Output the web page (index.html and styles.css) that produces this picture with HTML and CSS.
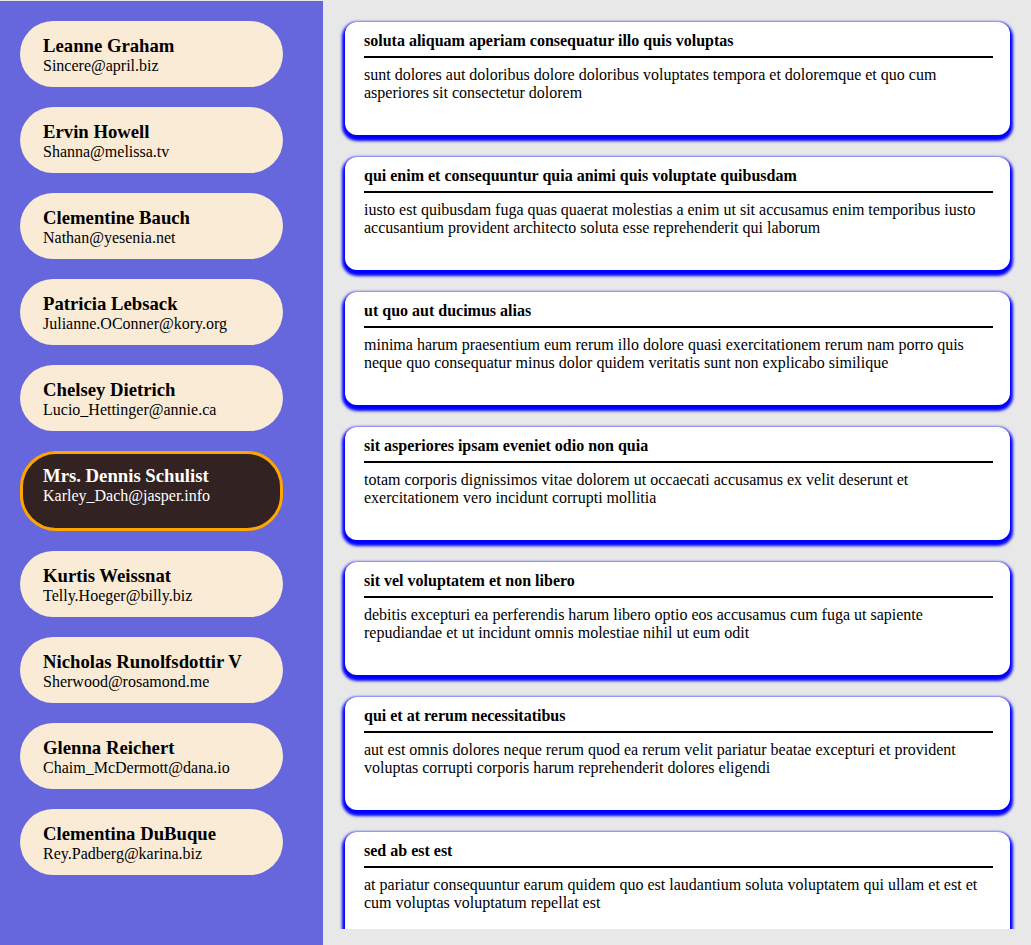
FILE: index.html
```html
<!DOCTYPE html>
<html>
<head>
<meta charset="utf-8">
<link rel="stylesheet" href="styles.css">
</head>
<body>
<div class="app">
  <aside class="sidebar">
    <div class="user"><div class="name">Leanne Graham</div><div class="email">Sincere@april.biz</div></div>
    <div class="user"><div class="name">Ervin Howell</div><div class="email">Shanna@melissa.tv</div></div>
    <div class="user"><div class="name">Clementine Bauch</div><div class="email">Nathan@yesenia.net</div></div>
    <div class="user"><div class="name">Patricia Lebsack</div><div class="email">Julianne.OConner@kory.org</div></div>
    <div class="user"><div class="name">Chelsey Dietrich</div><div class="email">Lucio_Hettinger@annie.ca</div></div>
    <div class="user selected"><div class="name">Mrs. Dennis Schulist</div><div class="email">Karley_Dach@jasper.info</div></div>
    <div class="user"><div class="name">Kurtis Weissnat</div><div class="email">Telly.Hoeger@billy.biz</div></div>
    <div class="user"><div class="name">Nicholas Runolfsdottir V</div><div class="email">Sherwood@rosamond.me</div></div>
    <div class="user"><div class="name">Glenna Reichert</div><div class="email">Chaim_McDermott@dana.io</div></div>
    <div class="user"><div class="name">Clementina DuBuque</div><div class="email">Rey.Padberg@karina.biz</div></div>
  </aside>
  <main class="main">
    <div class="posts">
      <article class="post"><h3 class="title">soluta aliquam aperiam consequatur illo quis voluptas</h3><p class="body">sunt dolores aut doloribus dolore doloribus voluptates tempora et doloremque et quo cum asperiores sit consectetur dolorem</p></article>
      <article class="post"><h3 class="title">qui enim et consequuntur quia animi quis voluptate quibusdam</h3><p class="body">iusto est quibusdam fuga quas quaerat molestias a enim ut sit accusamus enim temporibus iusto accusantium provident architecto soluta esse reprehenderit qui laborum</p></article>
      <article class="post"><h3 class="title">ut quo aut ducimus alias</h3><p class="body">minima harum praesentium eum rerum illo dolore quasi exercitationem rerum nam porro quis neque quo consequatur minus dolor quidem veritatis sunt non explicabo similique</p></article>
      <article class="post"><h3 class="title">sit asperiores ipsam eveniet odio non quia</h3><p class="body">totam corporis dignissimos vitae dolorem ut occaecati accusamus ex velit deserunt et exercitationem vero incidunt corrupti mollitia</p></article>
      <article class="post"><h3 class="title">sit vel voluptatem et non libero</h3><p class="body">debitis excepturi ea perferendis harum libero optio eos accusamus cum fuga ut sapiente repudiandae et ut incidunt omnis molestiae nihil ut eum odit</p></article>
      <article class="post"><h3 class="title">qui et at rerum necessitatibus</h3><p class="body">aut est omnis dolores neque rerum quod ea rerum velit pariatur beatae excepturi et provident voluptas corrupti corporis harum reprehenderit dolores eligendi</p></article>
      <article class="post"><h3 class="title">sed ab est est</h3><p class="body">at pariatur consequuntur earum quidem quo est laudantium soluta voluptatem qui ullam et est et cum voluptas voluptatum repellat est</p></article>
    </div>
  </main>
</div>
</body>
</html>
```

FILE: styles.css
```css
* { box-sizing: border-box; }
html, body { margin: 0; padding: 0; }
body {
  padding-top: 1px;
  background: #e8e8e8;
  font-family: "Liberation Serif", "Times New Roman", serif;
  font-size: 16px;
  color: #000;
  overflow: hidden;
}
.app {
  display: flex;
  height: 944px;
}
.sidebar {
  width: 323px;
  flex: none;
  background: #6666dd;
  padding: 20px 0 0 20px;
  display: flex;
  flex-direction: column;
  gap: 20px;
}
.user {
  width: 263px;
  height: 66px;
  background: #faebd7;
  border-radius: 33px;
  padding: 14px 20px 0 23px;
}
.user.selected {
  height: 80px;
  background: #332222;
  color: #fff;
  border: 3px solid #ffa500;
  border-radius: 36px;
  padding: 11px 17px 0 20px;
}
.name {
  font-size: 18.72px;
  line-height: 21px;
  font-weight: bold;
}
.email {
  margin-top: 1px;
  font-size: 16px;
  line-height: 17px;
}
.main {
  flex: 1;
}
.posts {
  height: 928px;
  overflow: hidden;
  padding: 21px 21px 0 22px;
  display: flex;
  flex-direction: column;
  gap: 22px;
}
.post {
  flex: none;
  height: 113px;
  background: #fff;
  border-radius: 12px;
  padding: 10px 17px 0 19px;
  box-shadow: 0 3px 3px 3px #0000ff;
}
.title {
  margin: 0;
  font-size: 16px;
  font-weight: bold;
  padding-bottom: 6px;
  border-bottom: 2px solid #000;
}
.body {
  margin: 8px 0 0;
  font-size: 16px;
}
```
